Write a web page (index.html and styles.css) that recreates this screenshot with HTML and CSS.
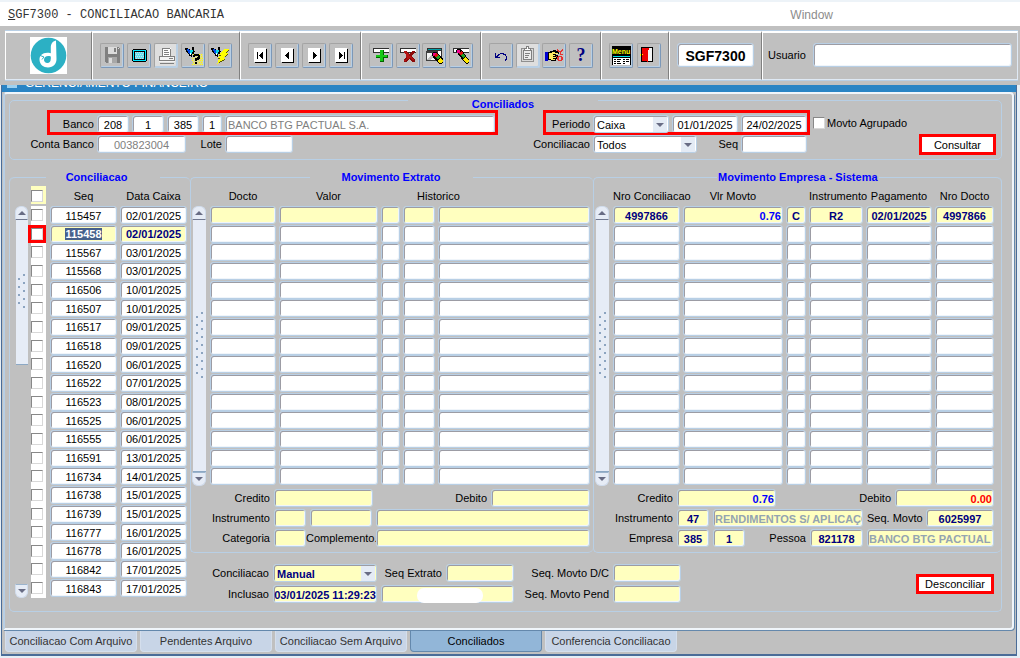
FILE: index.html
```html
<!DOCTYPE html>
<html lang="pt-BR">
<head>
    <meta charset="UTF-8">
    <meta name="viewport" content="width=device-width, initial-scale=1.0">
    <title>SGF7300 - Conciliacao Bancaria</title>
    <link rel="stylesheet" href="styles.css">
</head>
<body>
    <header class="menu-bar">
        <a class="menu-title" href="#"><u>S</u>GF7300 - CONCILIACAO BANCARIA</a>
        <a class="menu-window" href="#">Window</a>
    </header>

    <div class="toolbar">
        <div class="group group-logo">
            <svg class="logo" viewBox="0 0 37 37" width="37" height="37">
                <rect width="37" height="37" fill="#fff"/>
                <circle cx="18.500" cy="18.500" r="17.800" fill="#2cb0c4"/>
                <path d="M26 3.500C22 4.500 20.800 7 20.800 11v5.200C13.500 14.500 9.500 18 9.500 22.500c0 5 4 8 8.500 8 5.500 0 8.500-4 8.500-8.500z" fill="#fff"/>
                <path d="M20.800 19.500c-4-1.200-6.800.5-6.800 3.300 0 1.800 1.300 3.200 3.300 3.200 2.500 0 3.500-2 3.500-4.500z" fill="#2cb0c4"/>
                <path d="M9 18l5 2-2 2.500" fill="none" stroke="#2cb0c4" stroke-width="1"/>
            </svg>
        </div>

        <div class="group group-file">
            <button class="tool" aria-label="Salvar" disabled>
                <svg viewBox="0 0 20 20" width="20" height="20">
                    <path d="M3 2h13l2 2v14H4l-1-1z" fill="#808080"/>
                    <path d="M6 2h9v7H6z" fill="#dcdcdc"/>
                    <path d="M12 3h2v4h-2z" fill="#808080"/>
                    <path d="M6 12h9v6H6z" fill="#a8a8a8"/>
                    <path d="M7 13h3v5H7z" fill="#dcdcdc"/>
                    <path d="M16 3h1v1h-1z" fill="#dcdcdc"/>
                </svg>
            </button>
            <button class="tool" aria-label="Tela">
                <svg viewBox="0 0 20 20" width="20" height="20">
                    <path d="M4 4h13v1h1v11h-1v1H4v-1H3V5h1z" fill="#000"/>
                    <path d="M4 5h13v11H4z" fill="#00e5ff"/>
                    <path d="M5 6h11v9H5z" fill="#000"/>
                    <path d="M6 7h9v7H6z" fill="#5fe4f0"/>
                    <path d="M6 7h1v1H6zM8 7h1v1H8zM10 7h1v1h-1zM12 7h1v1h-1zM14 7h1v1h-1zM7 9h1v1H7zM9 9h1v1H9zM11 9h1v1h-1zM13 9h1v1h-1zM6 11h1v1H6zM8 11h1v1H8zM10 11h1v1h-1zM12 11h1v1h-1zM14 11h1v1h-1zM7 13h1v1H7zM9 13h1v1H9zM11 13h1v1h-1zM13 13h1v1h-1z" fill="#d8d8e8"/>
                </svg>
            </button>
            <button class="tool tool-off" aria-label="Imprimir" disabled>
                <svg viewBox="0 0 20 20" width="20" height="20">
                    <path d="M6 3h9v9H6z" fill="#fff"/>
                    <path d="M6 3h8v1H7v7H6zM14 4h1v7h-1z" fill="#808080"/>
                    <path d="M8 5h4v1H8zM8 7h5v1H8zM8 9h5v1H8z" fill="#808080"/>
                    <path d="M3 11h16v6H3z" fill="#f4f4f4"/>
                    <path d="M3 11h16v1H3zM3 11h1v5H3zM18 11h1v5h-1zM3 15h16v1H3zM4 18h14v1H4z" fill="#808080"/>
                    <path d="M13 13h4v1h-4z" fill="#808080"/>
                </svg>
            </button>
            <button class="tool" aria-label="Entrar consulta">
                <svg viewBox="0 0 20 20" width="20" height="20">
                    <path d="M10 9h10v11H10z" fill="#dcd890"/>
                    <path d="M8 11h1v1H8zM10 9h1v1h-1zM12 9h1v1h-1zM14 9h1v1h-1zM16 9h1v1h-1zM18 9h1v1h-1zM9 13h1v1H9zM18 11h1v1h-1zM19 13h1v1h-1zM17 13h1v1h-1zM9 15h1v1H9zM19 15h1v1h-1zM17 15h1v1h-1zM10 17h1v1h-1zM18 17h1v1h-1zM16 17h1v1h-1zM9 19h1v1H9zM11 19h1v1h-1zM17 19h1v1h-1zM19 19h1v1h-1z" fill="#ffff00"/>
                    <path d="M2 3h3v1h2v1h2V2h2v4h1v1h-1v2H9v3H8v-1H6V9H5V8H4V7H3V5H2z" fill="#000"/>
                    <path d="M4 4h2v1h1v4H6V8H5V6H4z" fill="#0048e8"/>
                    <path d="M7 5h3v2H9v2H7z" fill="#00d8e8"/>
                    <path d="M7 8h1v2H7z" fill="#fff"/>
                    <path d="M11 9h5v1h1v4h-1v1h-2v1h-2v-3h2v-1h1v-1h-3v1h-2v-2h1zM12 17h2v2h-2z" fill="#000"/>
                </svg>
            </button>
            <button class="tool" aria-label="Executar consulta">
                <svg viewBox="0 0 20 20" width="20" height="20">
                    <path d="M1 3h3v1h2v1h2V2h2v4h1v1h-1v2H8v3H7v-1H5V9H4V8H3V7H2V5H1z" fill="#000"/>
                    <path d="M3 4h2v1h1v4H5V8H4V6H3z" fill="#0048e8"/>
                    <path d="M6 5h3v2H8v2H6z" fill="#00d8e8"/>
                    <path d="M6 8h1v2H6z" fill="#fff"/>
                    <path d="M14 4h5v1h-1v1h-1v1h-1v1h2v1h-1v1h-1v1h-1v1h-1v1h1v1h-1v1h-2v1h-1v1H9v1H8v1H7v-1h1v-3h1v-2H8v-1h1v-1h1v-1H9V9h1V8h1V7h1V6h1V5h1z" fill="#ffff00"/>
                    <path d="M18 5h1v1h-1v1h-1v1h-1V7h1V6h1zM17 9h1v1h-1v1h-1v1h-1v-1h1v-1h1zM14 14h1v1h-1v1h-2v1h-2v1H9v-1h1v-1h2v-1h2zM8 13h2v1H8zM9 10h2v1H9z" fill="#585800"/>
                </svg>
            </button>
        </div>

        <div class="group group-nav">
            <button class="tool" aria-label="Primeiro">
                <svg viewBox="0 0 20 20" width="20" height="20">
                    <path d="M5 4h12v14H5z" fill="#000"/><path d="M4 3h12v14H4z" fill="#fff"/>
                    <path d="M7 7h1v7H7zM12 7h1v7h-1v-1h-1v-1h-1v-1H9v-1h1V9h1V8h1z" fill="#000"/>
                </svg>
            </button>
            <button class="tool" aria-label="Anterior">
                <svg viewBox="0 0 20 20" width="20" height="20">
                    <path d="M5 4h12v14H5z" fill="#000"/><path d="M4 3h12v14H4z" fill="#fff"/>
                    <path d="M11 7h1v7h-1v-1h-1v-1H9v-1H8v-1h1V9h1V8h1z" fill="#000"/>
                </svg>
            </button>
            <button class="tool" aria-label="Proximo">
                <svg viewBox="0 0 20 20" width="20" height="20">
                    <path d="M5 4h12v14H5z" fill="#000"/><path d="M4 3h12v14H4z" fill="#fff"/>
                    <path d="M9 7h1v1h1v1h1v1h1v1h-1v1h-1v1h-1v1H9z" fill="#000"/>
                </svg>
            </button>
            <button class="tool" aria-label="Ultimo">
                <svg viewBox="0 0 20 20" width="20" height="20">
                    <path d="M5 4h12v14H5z" fill="#000"/><path d="M4 3h12v14H4z" fill="#fff"/>
                    <path d="M13 7h1v7h-1zM8 7h1v1h1v1h1v1h1v1h-1v1h-1v1H9v1H8z" fill="#000"/>
                </svg>
            </button>
        </div>

        <div class="group group-edit">
            <button class="tool" aria-label="Inserir registro">
                <svg viewBox="0 0 20 20" width="20" height="20">
                    <path d="M2 3h16v5H2z" fill="#303030"/><path d="M3 4h15v3H3z" fill="#fff"/>
                    <path d="M9 5h4v5h4v3h-4v4H9v-4H5v-3h4z" fill="#006400"/>
                    <path d="M9 5h3v5h4v2h-4v4H9v-4H5v-2h4z" fill="#14c814"/>
                </svg>
            </button>
            <button class="tool" aria-label="Excluir registro">
                <svg viewBox="0 0 20 20" width="20" height="20">
                    <path d="M2 3h16v5H2z" fill="#303030"/><path d="M3 4h15v3H3z" fill="#fff"/>
                    <path d="M6 6h3v1h1v1h1v1h1V8h1V7h1V6h3v2h-1v1h-1v1h-1v2h1v1h1v1h1v3h-3v-1h-1v-1h-1v-1h-1v1h-1v1H9v1H6v-3h1v-1h1v-1h1v-2H8V9H7V8H6z" fill="#8c0a0a"/>
                    <path d="M6 6h2v1h1v1h1v1h1v2h2v1h1v1h1v1h1v1h-2v-1h-1v-1h-2v1H9v1H8v1H6v-1h2v-1h1v-2H8V9H7V8H6z" fill="#b41414"/>
                </svg>
            </button>
            <button class="tool" aria-label="Limpar bloco">
                <svg viewBox="0 0 20 20" width="20" height="20">
                    <path d="M3 3h15v11H3z" fill="#303030"/><path d="M4 4h13v1H4z" fill="#00a0a8"/>
                    <path d="M4 6h13v7H4z" fill="#fff"/>
                    <path d="M2 6h12v10H2z" fill="#404040"/><path d="M3 8h10v7H3z" fill="#f4f4f4"/><path d="M3 15l6-7h2v2l-4 5z" fill="#c0c0c0"/>
                    <path d="M9 7h4l6 7v3l-2 2h-2l-6-7-1-3z" fill="#000"/>
                    <path d="M9 8h3v3H9z" fill="#f00090"/><path d="M10 11l2-3 2 2-2 3z" fill="#e01010"/><path d="M12 13l2-3 2 2-2 3z" fill="#20a020"/><path d="M14 15l2-2 3 3-2 2h-2z" fill="#ffe800"/>
                </svg>
            </button>
            <button class="tool" aria-label="Limpar registro">
                <svg viewBox="0 0 20 20" width="20" height="20">
                    <path d="M2 3h16v5H2z" fill="#303030"/><path d="M3 4h15v3H3z" fill="#fff"/>
                    <path d="M6 4h4l8 11v2l-2 2-2-1L7 9 5 6z" fill="#000"/>
                    <path d="M6 5h3v3H6z" fill="#f00090"/><path d="M8 9l2-3 2 2-2 3z" fill="#e01010"/><path d="M10 11l2-3 2 3-2 2z" fill="#20a020"/><path d="M12 14l2-2 4 4-2 2h-1z" fill="#ffe800"/>
                </svg>
            </button>
        </div>

        <div class="group group-help">
            <button class="tool" aria-label="Desfazer">
                <svg viewBox="0 0 20 20" width="20" height="20">
                    <path d="M4 8h1v4h4v1H4zM5 11h1v-1h1V9h2V8h4v1h2v2h1v4h-1v1h-1v-2h1v-3h-1v-1h-2V9h-3v1H8v1H7v1H5z" fill="#000080"/>
                </svg>
            </button>
            <button class="tool tool-off" aria-label="Colar" disabled>
                <svg viewBox="0 0 20 20" width="20" height="20">
                    <path d="M3 3h13v14H3z" fill="#909090"/><path d="M4 4h11v12H4z" fill="#d8d8d8"/>
                    <path d="M5 5h9v10H5z" fill="#808080"/><path d="M6 6h7v8H6z" fill="#ececec"/>
                    <path d="M8 1h3v2h2v3H6V3h2z" fill="#808080"/><path d="M9 2h1v2H9zM7 4h5v1H7z" fill="#fff"/>
                    <path d="M7 8h5v1H7zM7 10h4v1H7zM7 12h3v1H7z" fill="#808080"/>
                </svg>
            </button>
            <button class="tool" aria-label="Lista de valores">
                <svg viewBox="0 0 20 20" width="20" height="20">
                    <path d="M1 7h3v9H1z" fill="#0000d0"/>
                    <path d="M4 7h2V6h3V5h3v1h3v3h-3v1h2v2h-1v2h-1v2H7v-1H4z" fill="#000"/>
                    <path d="M5 8h3V7h3v1h3v1H9v1h2v1H9v1h3v1H9v1h2v1H7v-1H5z" fill="#ffe860"/>
                    <path d="M13 4h1v1h1v1h2V5h1V4h1v2h-1v1h-1v2h2v1h-3V7h-2V6h-1zM14 11h4v1h1v3h-1v1h-4v-1h-1v-3h1zm1 1v3h2v-3zM12 11h1v1h-1z" fill="#e83030"/>
                </svg>
            </button>
            <button class="tool" aria-label="Ajuda">
                <svg viewBox="0 0 20 20" width="20" height="20">
                    <text class="icon-help" x="10" y="16" text-anchor="middle">?</text>
                </svg>
            </button>
        </div>

        <div class="group group-exit">
            <button class="tool" aria-label="Menu">
                <svg viewBox="0 0 20 20" width="20" height="20">
                    <path d="M1 1h19v19H1z" fill="#000"/>
                    <text class="icon-menu" x="1" y="9">Menu</text>
                    <path d="M2 11h17v1H2z" fill="#00e0e8"/><path d="M2 13h17v7H2z" fill="#fff"/>
                    <path d="M3 14h2v1H3zM6 14h4v1H6zM12 14h2v1h-2zM15 14h3v1h-3zM3 16h2v1H3zM6 16h3v1H6zM12 16h2v1h-2zM15 16h3v1h-3zM3 18h2v1H3zM6 18h4v1H6zM12 18h2v1h-2z" fill="#000"/>
                </svg>
            </button>
            <button class="tool" aria-label="Sair">
                <svg viewBox="0 0 20 20" width="20" height="20">
                    <path d="M2 2h12v15H2z" fill="#000"/><path d="M9 3h4v13H9z" fill="#f4f4f4"/>
                    <path d="M3 3h7v2h-1v12H8v-1H3z" fill="#f00000"/><path d="M1 9h1v2H1zM3 9h1v1H3z" fill="#ffff00"/>
                </svg>
            </button>
        </div>

        <div class="group group-code">
            <input class="field code" type="text" value="SGF7300" aria-label="Programa">
        </div>
        <div class="group group-user">
            <label for="usuario">Usuario</label>
            <input class="field" type="text" id="usuario">
        </div>
    </div>

    <main class="window">
        <div class="window-title">
            <svg viewBox="0 0 10 8" width="10" height="8"><path d="M0 0h10v6H0z" fill="#9cd0f0"/><path d="M2 1h2v2H2zM5 2h2v1H5z" fill="#1c6ca8"/></svg>
            <span>GERENCIAMENTO FINANCEIRO</span>
        </div>

        <div class="panel">
            <fieldset class="frame search">
                <legend>Conciliados</legend>
                <div class="search-bank">
                    <div class="row marked row-bank">
                        <label for="banco">Banco</label>
                        <input class="field w32 center" id="banco" type="text" value="208">
                        <input class="field w32 center" type="text" value="1" aria-label="Filial">
                        <input class="field w32 center" type="text" value="385" aria-label="Empresa">
                        <input class="field w20 center" type="text" value="1" aria-label="Sequencia">
                        <input class="field grow muted" type="text" value="BANCO BTG PACTUAL S.A." aria-label="Nome do banco">
                    </div>
                    <div class="row">
                        <label class="label-account" for="conta">Conta Banco</label>
                        <input class="field w89 center muted" id="conta" type="text" value="003823004">
                        <label class="label-lote" for="lote">Lote</label>
                        <input class="field w68" id="lote" type="text">
                    </div>
                </div>
                <div class="search-period">
                    <div class="row marked row-period">
                        <label for="periodo">Periodo</label>
                        <span class="select w76"><select id="periodo"><option>Caixa</option></select></span>
                        <input class="field w66 center" type="text" value="01/01/2025" aria-label="Data inicial">
                        <input class="field w66 center" type="text" value="24/02/2025" aria-label="Data final">
                    </div>
                    <div class="row">
                        <label class="label-status" for="situacao">Conciliacao</label>
                        <span class="select w104"><select id="situacao"><option>Todos</option></select></span>
                        <label class="label-seq" for="seq">Seq</label>
                        <input class="field w66" id="seq" type="text">
                    </div>
                </div>
                <div class="search-action">
                    <label class="check-label"><input type="checkbox" class="check">Movto Agrupado</label>
                    <button class="action">Consultar</button>
                </div>
            </fieldset>

            <div class="detail">
                <fieldset class="frame list">
                    <legend>Conciliacao</legend>
                    <div class="records">
                        <div class="scroll scroll-short">
                            <button class="up" aria-label="Acima"></button>
                            <div class="thumb"><i></i></div>
                            <button class="down" aria-label="Abaixo"></button>
                        </div>
                        <table class="list-table">
                            <colgroup><col class="c-check"><col class="c-seq"><col></colgroup>
                            <thead>
                                <tr>
                                    <th class="check-all"><input type="checkbox" class="check" aria-label="Marcar todos"></th>
                                    <th>Seq</th>
                                    <th>Data Caixa</th>
                                </tr>
                            </thead>
                            <tbody id="lista"></tbody>
                        </table>
                    </div>
                </fieldset>

                <div class="detail-main">
                    <div class="movements">
                        <fieldset class="frame statement">
                            <legend>Movimento Extrato</legend>
                            <div class="records">
                                <div class="scroll">
                                    <button class="up" aria-label="Acima"></button>
                                    <div class="thumb"><i></i></div>
                                    <button class="down" aria-label="Abaixo"></button>
                                </div>
                                <table class="move-table">
                                    <colgroup><col class="e-docto"><col class="e-valor"><col class="e-dc"><col class="e-cod"><col></colgroup>
                                    <thead>
                                        <tr><th>Docto</th><th>Valor</th><th></th><th class="th-hist" colspan="2">Historico</th></tr>
                                    </thead>
                                    <tbody id="extrato"></tbody>
                                </table>
                            </div>
                            <div class="form">
                                <div class="row">
                                    <label class="label-main" for="ext-credito">Credito</label>
                                    <input class="field yellow w99" id="ext-credito" type="text">
                                    <label class="grow" for="ext-debito">Debito</label>
                                    <input class="field yellow w99" id="ext-debito" type="text">
                                </div>
                                <div class="row">
                                    <label class="label-main" for="ext-instr">Instrumento</label>
                                    <input class="field yellow w32" id="ext-instr" type="text">
                                    <input class="field yellow w62" type="text" aria-label="Codigo do instrumento">
                                    <input class="field yellow grow" type="text" aria-label="Descricao do instrumento">
                                </div>
                                <div class="row">
                                    <label class="label-main" for="ext-categ">Categoria</label>
                                    <input class="field yellow w32" id="ext-categ" type="text">
                                    <label class="label-compl" for="ext-compl">Complemento.</label>
                                    <input class="field yellow grow" id="ext-compl" type="text">
                                </div>
                            </div>
                        </fieldset>

                        <fieldset class="frame company">
                            <legend>Movimento Empresa - Sistema</legend>
                            <div class="records">
                                <div class="scroll">
                                    <button class="up" aria-label="Acima"></button>
                                    <div class="thumb"><i></i></div>
                                    <button class="down" aria-label="Abaixo"></button>
                                </div>
                                <table class="move-table">
                                    <colgroup><col class="m-nro"><col class="m-vlr"><col class="m-dc"><col class="m-instr"><col class="m-pag"><col></colgroup>
                                    <thead>
                                        <tr><th>Nro Conciliacao</th><th>Vlr Movto</th><th></th><th>Instrumento</th><th>Pagamento</th><th>Nro Docto</th></tr>
                                    </thead>
                                    <tbody id="empresa"></tbody>
                                </table>
                            </div>
                            <div class="form">
                                <div class="row">
                                    <label class="label-main" for="emp-credito">Credito</label>
                                    <input class="field yellow w99 amount" id="emp-credito" type="text" value="0.76">
                                    <label class="grow" for="emp-debito">Debito</label>
                                    <input class="field yellow w99 amount debit" id="emp-debito" type="text" value="0.00">
                                </div>
                                <div class="row">
                                    <label class="label-main" for="emp-instr">Instrumento</label>
                                    <input class="field yellow w32 center" id="emp-instr" type="text" value="47">
                                    <input class="field yellow grow faded" type="text" value="RENDIMENTOS S/ APLICAÇÕES" aria-label="Descricao do instrumento">
                                    <label class="label-movto" for="emp-seq">Seq. Movto</label>
                                    <input class="field yellow w68 center" id="emp-seq" type="text" value="6025997">
                                </div>
                                <div class="row">
                                    <label class="label-main" for="emp-empresa">Empresa</label>
                                    <input class="field yellow w32 center" id="emp-empresa" type="text" value="385">
                                    <input class="field yellow w32 center" type="text" value="1" aria-label="Filial">
                                    <label class="grow" for="emp-pessoa">Pessoa</label>
                                    <input class="field yellow w53 center" id="emp-pessoa" type="text" value="821178">
                                    <input class="field yellow w127 faded" type="text" value="BANCO BTG PACTUAL S.A." aria-label="Nome da pessoa">
                                </div>
                            </div>
                        </fieldset>
                    </div>

                    <div class="summary">
                        <div class="form">
                            <div class="row">
                                <label class="label-main" for="sum-tipo">Conciliacao</label>
                                <span class="select w104 yellow"><select id="sum-tipo"><option>Manual</option></select></span>
                                <label class="label-ext" for="sum-ext">Seq Extrato</label>
                                <input class="field yellow w68" id="sum-ext" type="text">
                                <label class="label-pend" for="sum-dc">Seq. Movto D/C</label>
                                <input class="field yellow w68" id="sum-dc" type="text">
                            </div>
                            <div class="row">
                                <label class="label-main" for="sum-incl">Inclusao</label>
                                <input class="field yellow w104 center" id="sum-incl" type="text" value="03/01/2025 11:29:23">
                                <span class="user"><input class="field yellow" type="text" aria-label="Usuario da inclusao"></span>
                                <label class="label-pend" for="sum-pend">Seq. Movto Pend</label>
                                <input class="field yellow w68" id="sum-pend" type="text">
                            </div>
                        </div>
                        <button class="action">Desconciliar</button>
                    </div>
                </div>
            </div>
        </div>

        <nav class="tabs" role="tablist">
            <button role="tab">Conciliacao Com Arquivo</button>
            <button role="tab">Pendentes Arquivo</button>
            <button role="tab">Conciliacao Sem Arquivo</button>
            <button role="tab" class="active" aria-selected="true">Conciliados</button>
            <button role="tab">Conferencia Conciliacao</button>
        </nav>
    </main>

    <script src="script.js"></script>
</body>
</html>
```
FILE: styles.css
```css
* {
    box-sizing: border-box;
}

body {
    margin: 0;
    font-family: "Liberation Sans", Arial, sans-serif;
    font-size: 11px;
    color: #000;
    background: #e6eff6;
}

input,
select,
button {
    font: inherit;
    color: inherit;
    margin: 0;
}

fieldset {
    min-width: 0;
    margin: 0;
    padding: 0;
}

::selection {
    background: #46608c;
    color: #fff;
}

/* Menu bar */
.menu-bar {
    display: flex;
    align-items: center;
    justify-content: space-between;
    height: 26px;
    padding: 2px 187px 0 8px;
    border-top: 2px solid #edf3f8;
    background: #fff;
}

.menu-bar a {
    text-decoration: none;
    font-size: 12px;
}

.menu-title {
    font-family: "Liberation Mono", monospace;
    color: #333;
}

.menu-window {
    color: #8c8c8c;
}

/* Toolbar */
.toolbar {
    display: flex;
    height: 59px;
    padding: 5px 2px 5px 5px;
    background: #c0c0c0;
}

.group {
    display: flex;
    align-items: center;
    justify-content: space-between;
    padding: 0 7px 2px;
    border-top: 2px solid #fff;
    border-bottom: 1px solid #dfe9f4;
    border-right: 1px solid #808080;
    border-left: 1px solid #fff;
    box-shadow: 0 -1px 0 #b8cfe5, 0 1px 0 #b8cfe5;
}

.group-logo { width: 87px; justify-content: center; }
.group-file { width: 148px; }
.group-nav { width: 121px; }
.group-edit { width: 120px; }
.group-help { width: 120px; }
.group-exit { width: 68px; }
.group-code { width: 93px; }

.group-user {
    flex: 1;
    gap: 7px;
    padding: 0 5px 2px 5px;
    border-right-color: #dfe9f4;
}

.group .field {
    width: 100%;
    height: 24px;
}

.group-user .field {
    flex: 1;
}

.code {
    font-size: 14px;
    font-weight: bold;
    text-align: center;
}

.tool {
    width: 24px;
    height: 25px;
    padding: 1px;
    border: 1px solid;
    border-color: #a4a4a4 #7c98b8 #7c98b8 #a4a4a4;
    border-radius: 2px;
    background: #c0c0c0;
    box-shadow: inset -1px -1px 0 #b8cfe5;
}

.tool svg {
    display: block;
    shape-rendering: crispEdges;
}

.tool-off {
    background: #dedede;
    border-color: #a4a4a4 #b8cfe5 #b8cfe5 #a4a4a4;
}

.icon-help {
    font: bold 18px "Liberation Serif", serif;
    fill: #000080;
}

.icon-menu {
    font: bold 7px "Liberation Sans", sans-serif;
    fill: #ffff00;
}

/* Window */
.window {
    margin: 0 3px 0 1px;
    padding-bottom: 2px;
    border: solid #4a6c98;
    border-width: 0 1px 2px;
    background: #c0c0c0;
}

.window-title {
    display: flex;
    align-items: flex-end;
    gap: 8px;
    height: 7px;
    padding: 0 5px 2px;
    overflow: hidden;
    background: #2a84c4;
    color: #fff;
    font-size: 12px;
    line-height: 14px;
}

.panel {
    margin: 0 2px 0 1px;
    padding: 0 10px 16px 4px;
    border: 2px solid #f0f5fa;
    border-left-color: #b8cfe5;
    border-radius: 4px 4px 4px 0;
    box-shadow: 1px 1px 0 #6488ac;
}

.frame {
    border: 1px solid #b8cfe5;
    border-radius: 5px;
}

.frame legend {
    padding: 0;
    overflow: hidden;
    font-weight: bold;
    line-height: 15px;
    text-align: center;
    white-space: nowrap;
    color: #0000ff;
}

.row {
    display: flex;
    align-items: center;
    gap: 3px;
}

.row label {
    text-align: right;
    white-space: nowrap;
}

.field {
    min-width: 0;
    height: 18px;
    padding: 1px 2px 0;
    border: 1px solid #b8cfe5;
    border-radius: 3px;
    outline: none;
    background: #fff;
    box-shadow: inset 1px 1px 0 #9c9ca4, inset -1px -1px 0 #f0f5fa;
}

.yellow {
    background: #ffffbf;
    color: #000080;
    font-weight: bold;
}

.center { text-align: center; }
.grow { flex: 1; }
.muted { color: #808080; }
.faded { color: #94a4b0; padding: 1px 0 0 1px; }
.amount { text-align: right; color: #0000ff; padding-right: 1px; }
.debit { color: #ff0000; }

.w20 { width: 20px; }
.w32 { width: 32px; }
.w53 { width: 53px; }
.w62 { width: 62px; }
.w66 { width: 66px; }
.w68 { width: 68px; }
.w76 { width: 76px; }
.w89 { width: 89px; }
.w99 { width: 99px; }
.w104 { width: 104px; }
.w127 { width: 127px; }

.select {
    position: relative;
    display: block;
    height: 18px;
    border: 1px solid #b8cfe5;
    border-radius: 3px;
    background: #fff;
    box-shadow: inset 1px 1px 0 #9c9ca4;
}

.select.yellow {
    background: #ffffbf;
}

.select select {
    display: block;
    width: 100%;
    height: 17px;
    padding: 1px 16px 0 3px;
    border: 0;
    background: none;
    appearance: none;
}

.select::before {
    content: '';
    position: absolute;
    top: 1px;
    right: 1px;
    bottom: 0;
    width: 14px;
    background: #e4ebf5;
}

.select::after {
    content: '';
    position: absolute;
    top: 7px;
    right: 4px;
    border: 4px solid transparent;
    border-top-color: #686c84;
    border-bottom: 0;
}

.check {
    appearance: none;
    width: 12px;
    height: 12px;
    border: 1px solid;
    border-color: #888 #d8d8d8 #d8d8d8 #888;
    background: #fff;
}

.action {
    height: 21px;
    padding: 0 12px;
    border: 3px solid #ff0000;
    background: #fff;
    white-space: nowrap;
}

.marked {
    outline: 3px solid #ff0000;
    outline-offset: -1px;
}

/* Search */
.search {
    display: flex;
    margin-top: -4px;
    padding: 1px 5px 6px 0;
}

.search legend {
    width: 190px;
    padding-top: 7px;
    margin: 0 auto;
    line-height: 14px;
}

.search-bank,
.search-period {
    display: flex;
    flex-direction: column;
    gap: 2px;
}

.search-bank {
    flex: 1;
}

.search-period {
    margin-left: 34px;
}

.search .marked {
    padding-top: 3px;
}

.row-bank {
    margin-left: 39px;
    padding-right: 1px;
}

.row-bank label { width: 45px; }
.row-period { margin-left: 15px; padding-right: 1px; }
.row-period label { width: 45px; }
.label-account { width: 84px; }
.label-lote { width: 33px; }
.label-status { width: 60px; }
.label-seq { width: 38px; }

.search-action {
    display: flex;
    flex-direction: column;
    justify-content: space-between;
    width: 183px;
    margin: 0 0 -2px 5px;
}

.check-label {
    display: flex;
    align-items: center;
    gap: 2px;
    padding-top: 5px;
}

.search-action .action {
    align-self: flex-end;
}

/* Detail */
.detail {
    position: relative;
    display: flex;
    margin-top: 10px;
    padding: 0 1px 9px;
}

.detail::before {
    content: '';
    position: absolute;
    inset: 7px 0 0;
    border: 1px solid #b8cfe5;
    border-top: 0;
    border-radius: 5px;
    pointer-events: none;
}

.list {
    width: 180px;
    padding-left: 5px;
    border-width: 1px 0 0;
}

.list legend {
    width: 114px;
    margin: 0 auto;
    padding-right: 12px;
}

.detail-main {
    flex: 1;
    min-width: 0;
}

.movements {
    display: flex;
}

.statement {
    flex: 1;
    border-right: 0;
    padding: 0 3px 5px 1px;
}

.statement legend {
    width: 163px;
    margin: 0 auto;
}

.company {
    width: 408px;
    border-right: 0;
    padding: 0 7px 5px 1px;
}

.company legend {
    width: 162px;
    margin-left: 122px;
    padding-left: 1px;
    text-align: left;
}

.records {
    display: flex;
    gap: 4px;
}

.list .records {
    gap: 3px;
}

table {
    flex: 1;
    width: 100%;
    border-collapse: collapse;
    table-layout: fixed;
}

.list-table { height: 413px; }
.move-table { height: 301px; }

thead tr {
    height: 21px;
}

th {
    padding: 0 3px 0 0;
    font-weight: normal;
    white-space: nowrap;
    text-align: center;
    vertical-align: middle;
    line-height: 12px;
}

.th-hist {
    padding-left: 14px;
    text-align: left;
}

td {
    padding: 0 3px 0 0;
    vertical-align: top;
}

.move-table td:last-child,
.move-table th:last-child {
    padding-right: 0;
}

td .field {
    display: block;
    width: 100%;
}

td.check-cell {
    background: linear-gradient(#fff, #fff) no-repeat 0 0 / 15px 100%;
}

td.check-cell.current {
    background-image: linear-gradient(#ffffbf, #ffffbf);
}

td .check {
    display: block;
    margin-top: 3px;
}

th .check {
    display: block;
}

th.check-all {
    background: linear-gradient(#ffffbf, #ffffbf) no-repeat 0 1px / 15px 18px;
}

.current .check {
    outline: 3px solid #ff0000;
}

.c-check { width: 19px; }
.c-seq { width: 70px; }
.e-docto { width: 69px; }
.e-valor { width: 102px; }
.e-dc { width: 22px; }
.e-cod { width: 35px; }
.m-nro { width: 70px; }
.m-vlr { width: 103px; }
.m-dc { width: 23px; }
.m-instr { width: 57px; }
.m-pag { width: 69px; }

/* Scroll bars */
.scroll {
    display: flex;
    flex-direction: column;
    width: 14px;
    padding-top: 21px;
}

.list .scroll {
    width: 13px;
}

.scroll button {
    display: flex;
    justify-content: center;
    align-items: center;
    height: 14px;
    padding: 0;
    border: 1px solid #d0dcec;
    background: #e6ecf6;
}

.scroll .up {
    border-radius: 6px 6px 0 0;
    border-bottom-color: #707890;
}

.scroll .down {
    border-radius: 0 0 6px 6px;
    border-top-color: #9cb4cc;
    margin-top: auto;
}

.scroll button::before {
    content: '';
    border: 4px solid transparent;
    border-top: 0;
    border-bottom-color: #686c84;
}

.scroll .down::before {
    border-top: 4px solid #686c84;
    border-bottom: 0;
}

.thumb {
    display: flex;
    align-items: center;
    justify-content: center;
    flex: 1;
    margin-left: 1px;
    background: #e6ecf6;
    border-bottom: 1px solid #8ca8c4;
}

.thumb i {
    width: 10px;
    height: 68px;
    background:
        radial-gradient(circle at 2px 5px, #8ca4c0 1px, transparent 1px) 0 0 / 10px 8px,
        radial-gradient(circle at 7px 1px, #8ca4c0 1px, transparent 1px) 0 0 / 10px 8px;
}

.scroll-short .thumb {
    flex: none;
    height: 145px;
}

.scroll-short .thumb i {
    height: 36px;
}

/* Forms under the tables */
.form {
    display: flex;
    flex-direction: column;
    gap: 2px;
    padding-top: 3px;
}

.form .row {
    gap: 4px;
}

.label-main { width: 78px; }
.label-movto { width: 55px; }
.label-ext { width: 61px; }
.label-pend { width: 91px; }

.label-compl {
    width: 70px;
    margin: 0 -4px;
}

.summary {
    display: flex;
    align-items: center;
    justify-content: space-between;
    padding: 11px 7px 0 1px;
}

.summary .form {
    gap: 3px;
    padding-top: 0;
}

.summary .w104 {
    padding-left: 0;
    padding-right: 0;
}

.user {
    position: relative;
    width: 133px;
}

.user .field {
    display: block;
    width: 100%;
}

.user::after {
    content: '';
    position: absolute;
    top: 3px;
    left: 36px;
    width: 66px;
    height: 15px;
    border-radius: 7px;
    background: #fff;
}

.summary .action {
    height: 20px;
    padding: 0 6px;
}

/* Tabs */
.tabs {
    display: flex;
    gap: 3px;
    padding: 1px 0 0 3px;
}

.tabs button {
    width: 132px;
    height: 21px;
    padding: 0;
    border: 1px solid #d4deec;
    border-top: 0;
    border-radius: 0 0 4px 4px;
    background: #c8d5e7;
    color: #333;
    white-space: nowrap;
}

.tabs .active {
    border-color: #6488ac;
    background: #92b6d8;
    color: #000;
}
```
FILE: script.js
```js
var lista = [
    ['115457', '02/01/2025'],
    ['115458', '02/01/2025'],
    ['115567', '03/01/2025'],
    ['115568', '03/01/2025'],
    ['116506', '10/01/2025'],
    ['116507', '10/01/2025'],
    ['116517', '09/01/2025'],
    ['116518', '09/01/2025'],
    ['116520', '06/01/2025'],
    ['116522', '07/01/2025'],
    ['116523', '08/01/2025'],
    ['116525', '06/01/2025'],
    ['116555', '06/01/2025'],
    ['116591', '13/01/2025'],
    ['116734', '14/01/2025'],
    ['116738', '15/01/2025'],
    ['116739', '15/01/2025'],
    ['116777', '16/01/2025'],
    ['116778', '16/01/2025'],
    ['116842', '17/01/2025'],
    ['116843', '17/01/2025']
];
var selecionado = 1;
var linhas = 15;

function campo(valor, classe, rotulo) {
    return '<td><input type="text" class="field ' + classe + '" value="' + valor + '" aria-label="' + rotulo + '"></td>';
}

// Left list
document.getElementById('lista').innerHTML = lista.map(function (item, i) {
    var atual = i === selecionado;
    var classe = 'center' + (atual ? ' yellow' : '');
    return '<tr>' +
        '<td class="check-cell' + (atual ? ' current' : '') + '"><input type="checkbox" class="check" aria-label="Marcar ' + item[0] + '"></td>' +
        campo(item[0], classe + (atual ? ' selected' : ''), 'Seq') +
        campo(item[1], classe, 'Data Caixa') +
        '</tr>';
}).join('');

// Movement tables: only the first row carries data
function preencher(id, colunas) {
    var html = '';
    for (var i = 0; i < linhas; i++) {
        html += '<tr>' + colunas.map(function (c) {
            return i === 0 ? campo(c[1], 'yellow ' + c[2], c[0]) : campo('', '', c[0]);
        }).join('') + '</tr>';
    }
    document.getElementById(id).innerHTML = html;
}

preencher('extrato', [
    ['Docto', '', ''],
    ['Valor', '', ''],
    ['D/C', '', ''],
    ['Codigo', '', ''],
    ['Historico', '', '']
]);

preencher('empresa', [
    ['Nro Conciliacao', '4997866', 'center'],
    ['Vlr Movto', '0.76', 'amount'],
    ['D/C', 'C', 'center'],
    ['Instrumento', 'R2', 'center'],
    ['Pagamento', '02/01/2025', 'center'],
    ['Nro Docto', '4997866', 'center']
]);

// The current record has its number selected
var ativo = document.querySelector('.selected');
ativo.focus();
ativo.select();
```
